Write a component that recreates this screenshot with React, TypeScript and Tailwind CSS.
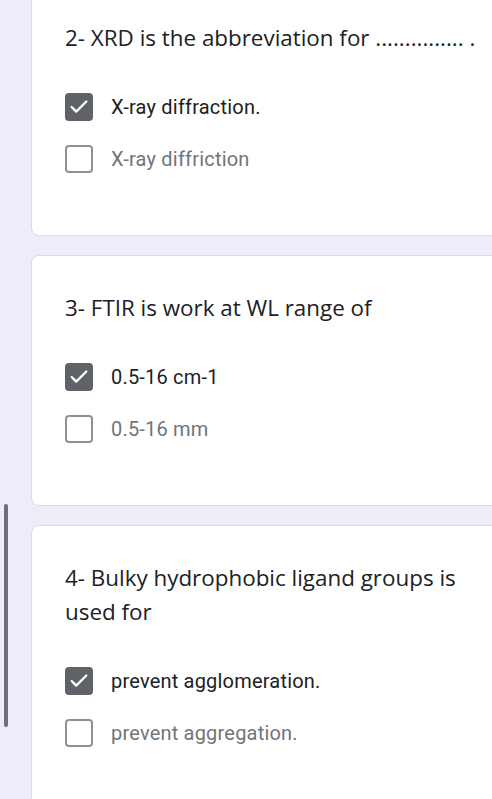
import { Check } from 'lucide-react';

interface Question {
    id: string;
    title: string;
    options: { label: string; checked: boolean }[];
}

const questions: Question[] = [
    {
        id: 'q2',
        title: '2- XRD is the abbreviation for ............... .',
        options: [
            { label: 'X-ray diffraction.', checked: true },
            { label: 'X-ray diffriction', checked: false }
        ]
    },
    {
        id: 'q3',
        title: '3- FTIR is work at WL range of',
        options: [
            { label: '0.5-16 cm-1', checked: true },
            { label: '0.5-16 mm', checked: false }
        ]
    },
    {
        id: 'q4',
        title: '4- Bulky hydrophobic ligand groups is used for',
        options: [
            { label: 'prevent agglomeration.', checked: true },
            { label: 'prevent aggregation.', checked: false }
        ]
    }
];

function Checkbox({ checked }: { checked: boolean }) {
    if (checked) {
        return (
            <span className="flex h-[28px] w-[28px] shrink-0 items-center justify-center rounded-[4px] bg-[#5f6368]">
                <Check className="h-[22px] w-[22px] text-white" strokeWidth={2.5} />
            </span>
        );
    }
    return <span className="h-[28px] w-[28px] shrink-0 rounded-[4px] border-2 border-[#8d9095] bg-white" />;
}

export default function App() {
    return (
        <div className="relative h-[799px] w-[492px] overflow-hidden bg-[#f0ebf8]">
            {/* scroll indicator */}
            <div className="absolute left-[4px] top-[504px] h-[223px] w-[4px] rounded-full bg-[#6e6d78]" />

            <div className="mt-[-15px] ml-[31px] mr-[-12px] flex flex-col gap-[19px]">
                {questions.map((q) => (
                    <div
                        key={q.id}
                        className="rounded-[8px] border border-[#dadce0] bg-white pt-[35px] pb-[50px] pl-[33px] pr-[10px]"
                    >
                        <p className="text-[22.4px] leading-[34px] text-[#202124] [font-family:'Open_Sans',sans-serif]">
                            {q.title}
                        </p>
                        <ul className="mt-[26px]">
                            {q.options.map((opt) => (
                                <li key={opt.label} className="flex h-[52px] items-center gap-[18px]">
                                    <Checkbox checked={opt.checked} />
                                    <span
                                        className={`text-[20px] tracking-[0.2px] [font-family:Roboto,sans-serif] ${
                                            opt.checked ? 'text-[#202124]' : 'text-[#70757a]'
                                        }`}
                                    >
                                        {opt.label}
                                    </span>
                                </li>
                            ))}
                        </ul>
                    </div>
                ))}
            </div>
        </div>
    );
}
